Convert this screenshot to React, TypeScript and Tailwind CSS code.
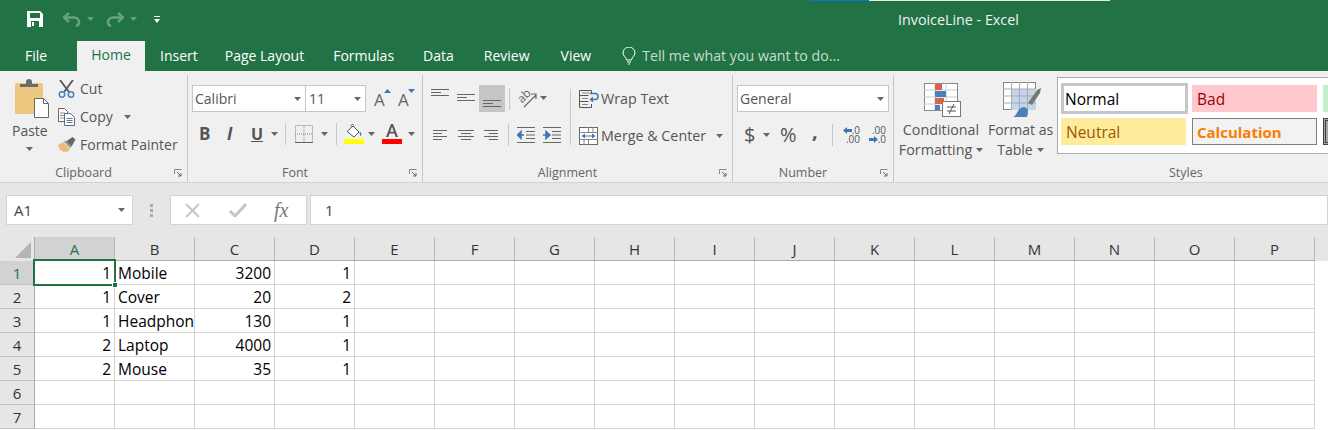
import React from 'react'

const font = 'font-["Open_Sans","Noto_Sans",sans-serif]'

const tabs = [
  { name: 'Insert', cls: 'ml-[15px]' },
  { name: 'Page Layout', cls: 'ml-[27px]' },
  { name: 'Formulas', cls: 'ml-[29px]' },
  { name: 'Data', cls: 'ml-[29px]' },
  { name: 'Review', cls: 'ml-[30px]' },
  { name: 'View', cls: 'ml-[31px]' },
]

const columns = ['A', 'B', 'C', 'D', 'E', 'F', 'G', 'H', 'I', 'J', 'K', 'L', 'M', 'N', 'O', 'P']

const rows: (string | number)[][] = [
  [1, 'Mobile', 3200, 1],
  [1, 'Cover', 20, 2],
  [1, 'Headphones', 130, 1],
  [2, 'Laptop', 4000, 1],
  [2, 'Mouse', 35, 1],
  [],
  [],
]

const Caret = ({ cls = '', color = '#666' }: { cls?: string; color?: string }) => (
  <svg width="7" height="4" viewBox="0 0 7 4" className={cls}>
    <path d="M0 0h7L3.5 4z" fill={color} />
  </svg>
)

const Sep = ({ h = 'h-[22px]', cls = '' }: { h?: string; cls?: string }) => <div className={`w-px bg-[#c6c6c6] ${h} ${cls}`} />

const Launcher = () => (
  <svg width="8" height="8" viewBox="0 0 8 8" className="absolute right-[5px] bottom-[5px]">
    <path d="M.5 5V.5H7.5M1 1" fill="none" stroke="#888" />
    <path d="M3 3l4 4M7 4v3H4" fill="none" stroke="#666" />
  </svg>
)

const Lines = ({ widths, x = 0, gap = 3, w = 18 }: { widths: number[]; x?: number; gap?: number; w?: number }) => (
  <svg width={w} height={(widths.length - 1) * gap + 1} viewBox={`0 0 ${w} ${(widths.length - 1) * gap + 1}`}>
    {widths.map((lw, i) => (
      <rect key={i} x={x === 0 ? 0 : x === 1 ? (w - lw) / 2 : w - lw} y={i * gap} width={lw} height="1" fill="#666" />
    ))}
  </svg>
)

const PasteIcon = () => (
  <svg width="35" height="39" viewBox="0 0 35 39">
    <rect x="0" y="4" width="28" height="31" rx="1.5" fill="#edc77f" />
    <path d="M5 8V5h6V3a3 3 0 0 1 6 0v2h6v3z" fill="#6b6b6b" />
    <path d="M19.500 19.500h9l5 5v14h-14z" fill="#fff" stroke="#666" />
    <path d="M28.500 19.500v5h5" fill="none" stroke="#666" />
  </svg>
)

const ScissorsIcon = () => (
  <svg width="17" height="18" viewBox="0 0 17 18">
    <path d="M2 0l9 12M15 0L6 12" stroke="#555" strokeWidth="1.800" fill="none" />
    <circle cx="4" cy="14.500" r="2.700" fill="none" stroke="#4a80b8" strokeWidth="1.500" />
    <circle cx="13" cy="14.500" r="2.700" fill="none" stroke="#4a80b8" strokeWidth="1.500" />
  </svg>
)

const CopyIcon = () => (
  <svg width="17" height="18" viewBox="0 0 17 18">
    <path d="M.5.500h6l3 3v10h-9z" fill="#fff" stroke="#666" />
    <path d="M2 5h5M2 7.500h5M2 10h5" stroke="#888" />
    <path d="M6.500 5.500h6l4 4v8h-10z" fill="#fff" stroke="#4a6f9a" />
    <path d="M8.500 10.500h6M8.500 12.500h6M8.500 14.500h6" stroke="#777" />
  </svg>
)

const BrushIcon = () => (
  <svg width="18" height="16" viewBox="0 0 18 16">
    <path d="M0 8l5-3 7 7-3 3.500-2-1-1.500 1-1.500-2-2-.5z" fill="#e8bd78" />
    <path d="M8 4.500L14.500 0l3 2.500-4 7z" fill="#666" />
    <path d="M6 5l6 6 1.500-1.500-6-6z" fill="#999" />
  </svg>
)

const GrowA = ({ up, color }: { up: boolean; color: string }) => (
  <div className="relative h-[18px] w-[16px] text-[17px] leading-[20px] text-[#666]">
    A
    <svg width="7" height="4" viewBox="0 0 7 4" className="absolute -right-[1px] -top-[1px]">
      <path d={up ? 'M0 4l3.500-4L7 4z' : 'M0 0h7L3.500 4z'} fill={color} />
    </svg>
  </div>
)

const BorderIcon = () => (
  <svg width="18" height="18" viewBox="0 0 18 18">
    <rect x=".5" y=".5" width="17" height="17" fill="none" stroke="#888" strokeDasharray="1 1" />
    <path d="M9 0v18M0 9h18" stroke="#888" strokeDasharray="1 1" />
    <path d="M0 17.500h18" stroke="#666" />
  </svg>
)

const FillIcon = () => (
  <svg width="20" height="20" viewBox="0 0 20 20">
    <path d="M3 7.500l6-5.500 6 6-5 5z" fill="#fff" stroke="#555" />
    <path d="M7 2.500c0-2 2-3 3-1" fill="none" stroke="#555" />
    <path d="M10 2l5.500 6c2-.5 2 2.500 1.500 4.500-1-1-1.500-3-1.500-4.500" fill="#3f75b4" />
    <rect x="0" y="15" width="20" height="5" fill="#ffff00" />
  </svg>
)

const FontColorIcon = () => (
  <svg width="20" height="20" viewBox="0 0 20 20">
    <path d="M4 13L9 0h2l5 13h-2.300l-1.200-3.500h-5L6.300 13zM8.200 7.700h3.600L10 2.600z" fill="#555" />
    <rect x="0" y="15" width="20" height="5" fill="#ff0000" />
  </svg>
)

const OrientIcon = () => (
  <div className="relative h-[18px] w-[20px]">
    <span className="absolute left-0 top-[-1px] -rotate-45 text-[12px] leading-[14px] text-[#666]">ab</span>
    <svg width="20" height="18" viewBox="0 0 20 18" className="absolute left-0 top-0">
      <path d="M7 17L19 5M14 4h5v5" fill="none" stroke="#666" strokeWidth="1.200" />
    </svg>
  </div>
)

const IndentIcon = ({ flip }: { flip?: boolean }) => (
  <svg width="18" height="16" viewBox="0 0 18 16">
    <path d="M0 .5h18M9 4.500h9M9 8h9M9 11.500h9M0 15.500h18" stroke="#666" />
    {flip ? <path d="M0 8h5M3 4.500l4 3.500-4 3.500z" stroke="#3f75b4" strokeWidth="1.500" fill="#3f75b4" /> : <path d="M7 8H2M4 4.500L.5 8 4 11.500z" stroke="#3f75b4" strokeWidth="1.500" fill="#3f75b4" />}
  </svg>
)

const WrapIcon = () => (
  <svg width="20" height="18" viewBox="0 0 20 18">
    <path d="M.5.500h12M.5 5.500h9M.5 11.500h9M.5 17.500h12M.5.500v17M12.500.500v3M12.500 14v3.500" stroke="#555" fill="none" />
    <path d="M3 3h8M3 8.500h6M3 14.500h6" stroke="#888" />
    <path d="M11 3.500h5a3 3 0 0 1 0 6h-4" fill="none" stroke="#3f75b4" strokeWidth="1.500" />
    <path d="M14 6.500l-3.500 3 3.500 3z" fill="#3f75b4" />
  </svg>
)

const MergeIcon = () => (
  <svg width="19" height="18" viewBox="0 0 19 18">
    <rect x=".5" y=".5" width="18" height="17" fill="#fff" stroke="#666" />
    <path d="M0 5.500h19M0 12.500h19M9.500 0v5.500M9.500 12.500V18M5 12.500V18M14 0v5.500" stroke="#888" />
    <path d="M3.500 9h12" stroke="#3f75b4" />
    <path d="M6 6.500L2.500 9 6 11.500zM13 6.500L16.500 9 13 11.500z" fill="#3f75b4" />
  </svg>
)

const DecArrow = ({ left }: { left?: boolean }) => (
  <svg width="9" height="7" viewBox="0 0 9 7">
    <path d={left ? 'M4 0v2h5v3H4v2L0 3.500z' : 'M5 0v2H0v3h5v2l4-3.500z'} fill="#3f75b4" />
  </svg>
)

const DecIcon = ({ more }: { more?: boolean }) => (
  <div className="h-[18px] w-[18px] text-[10px] leading-[9px] text-[#555]">
    {more ? (
      <>
        <div className="text-right">.00</div>
        <div className="flex items-center justify-end"><DecArrow />.0</div>
      </>
    ) : (
      <>
        <div className="flex items-center justify-end"><DecArrow left />.0</div>
        <div className="text-right">.00</div>
      </>
    )}
  </div>
)

const CondIcon = () => (
  <svg width="38" height="35" viewBox="0 0 38 35" className="ml-[3px]">
    <rect x=".5" y=".5" width="33" height="27" fill="#fff" stroke="#888" />
    <path d="M0 7h33M0 14h33M0 21h33M11 0v27M22 0v27" stroke="#ccc" />
    <rect x="11" y="1" width="7" height="6" fill="#d9634a" />
    <rect x="11" y="8" width="11" height="6" fill="#4a80b8" />
    <rect x="11" y="15" width="9" height="6" fill="#d9634a" />
    <rect x="11" y="22" width="5" height="5" fill="#4a80b8" />
    <rect x="18.500" y="18.500" width="18" height="15" fill="#fff" stroke="#777" />
    <path d="M23 24h9M23 28h9M30 21l-5 10" stroke="#555" />
  </svg>
)

const TableIcon = () => (
  <svg width="39" height="36" viewBox="0 0 39 36" className="ml-[3px]">
    <rect x=".5" y=".5" width="32" height="27" fill="#fff" stroke="#888" />
    <rect x="9" y="7" width="24" height="21" fill="#c3d5ea" />
    <path d="M0 7h33M0 14h33M0 21h33M8.500 0v28M16.500 0v28M24.500 0v28" stroke="#aaa" />
    <path d="M25 21l9-13 4-2-1 5-8 12z" fill="#777" />
    <path d="M10 35c4-1 4-9 11-10 4 1 5 4 3 10z" fill="#4a80b8" />
  </svg>
)

const Group = ({ label, w, children }: { label: string; w: string; children: React.ReactNode }) => (
  <div className={`relative flex h-[107px] shrink-0 flex-col border-r border-[#c6c6c6] ${w}`}>
    <div className="h-[90px] shrink-0">{children}</div>
    <div className="pr-[20px] text-center text-[12.5px] leading-[16px] text-[#666]">{label}</div>
    <Launcher />
  </div>
)

export default function App() {
  return (
    <div className={`h-[430px] w-[1328px] overflow-hidden bg-white ${font} relative`}>
      <div className="absolute top-0 left-[810px] h-px w-[59px] bg-[#0078d7]" />
      <div className="absolute top-0 left-[869px] h-px w-[241px] bg-[#e8e8e8]" />

      {/* title bar */}
      <div className="flex h-[41px] items-center bg-[#217346] pb-[3px] pl-[27px] text-white">
        <svg width="16" height="16" viewBox="0 0 16 16">
          <path d="M0 0h13l3 3v13H0z" fill="#fff" />
          <rect x="3" y="2" width="10" height="5" fill="#217346" />
          <rect x="4" y="10" width="8" height="6" fill="#217346" />
          <rect x="5" y="11" width="2" height="4" fill="#fff" />
        </svg>
        <svg width="18" height="15" viewBox="0 0 18 15" className="ml-[20px]">
          <path d="M6 1L1 5.500 6 10M1.500 5.500H11a5 5 0 0 1 5 4.500c0 2-1 3.500-3 4" fill="none" stroke="#6a9f83" strokeWidth="2.500" />
        </svg>
        <Caret cls="ml-[6px]" color="#6a9f83" />
        <svg width="18" height="15" viewBox="0 0 18 15" className="ml-[12px] -scale-x-100">
          <path d="M6 1L1 5.500 6 10M1.500 5.500H11a5 5 0 0 1 5 4.500c0 2-1 3.500-3 4" fill="none" stroke="#6a9f83" strokeWidth="2.500" />
        </svg>
        <Caret cls="ml-[6px]" color="#6a9f83" />
        <svg width="6" height="7" viewBox="0 0 6 7" className="ml-[17px]">
          <path d="M0 0h6v1H0zM0 3h6L3 7z" fill="#fff" />
        </svg>
        <div className="ml-[738px] mt-[2px] text-[14.3px] leading-[20px] text-[#f2f2f2]">InvoiceLine - Excel</div>
      </div>

      {/* tabs */}
      <div className="flex h-[30px] items-end bg-[#217346] text-[14px] leading-[20px] text-white">
        <div className="ml-[25px] w-[52px] pb-[5px]">File</div>
        <div className="flex h-[30px] w-[68px] items-center justify-center bg-[#f0f0f0] pb-[2px] text-[#217346]">Home</div>
        {tabs.map((t) => (
          <div key={t.name} className={`pb-[5px] ${t.cls}`}>{t.name}</div>
        ))}
        <div className="ml-[31px] flex items-center pb-[5px] text-[14.2px] text-[#c9dcd1]">
          <svg width="14" height="18" viewBox="0 0 14 18" className="mr-[6px]">
            <path d="M4.500 13c0-2.500-3.500-4-3.500-7a6 6 0 0 1 12 0c0 3-3.500 4.500-3.500 7z" fill="none" stroke="#fff" />
            <path d="M5 15h4M6 17h2" stroke="#fff" />
          </svg>
          Tell me what you want to do...
        </div>
      </div>

      {/* ribbon */}
      <div className="flex h-[112px] items-start overflow-hidden border-b border-[#d2d2d2] bg-[#f0f0f0] pt-[4px] text-[14px] leading-[18px] text-[#555]">
        <Group label="Clipboard" w="w-[188px]">
          <div className="flex">
            <div className="ml-[15px] flex w-[43px] flex-col items-start pt-[4px]">
              <PasteIcon />
              <div className="-ml-[3px] mt-[4px]">Paste</div>
              <Caret cls="ml-[11px] mt-[7px]" />
            </div>
            <div className="flex flex-col">
              <div className="flex h-[28px] items-center gap-[5px]"><ScissorsIcon />Cut</div>
              <div className="flex h-[28px] items-center gap-[5px]"><CopyIcon />Copy<Caret cls="ml-[6px]" /></div>
              <div className="flex h-[28px] items-center gap-[4px]"><BrushIcon />Format Painter</div>
            </div>
          </div>
        </Group>

        <Group label="Font" w="w-[235px]">
          <div className="flex items-start pl-[4px] pt-[10px]">
            <div className="flex h-[27px] w-[114px] items-center justify-between border border-[#c6c6c6] bg-white pl-[2px] pr-[4px]">Calibri<Caret /></div>
            <div className="flex h-[27px] w-[60px] items-center justify-between border border-l-0 border-[#c6c6c6] bg-white pl-[3px] pr-[4px]">11<Caret /></div>
            <div className="ml-[8px] mt-[5px]"><GrowA up color="#3f75b4" /></div>
            <div className="ml-[8px] mt-[5px]"><GrowA up={false} color="#3f75b4" /></div>
          </div>
          <div className="mt-[11px] flex h-[22px] items-center pl-[11px]">
            <span className="w-[27px] text-[17px] font-bold">B</span>
            <span className="w-[25px] pl-[1px] text-[17px] font-bold italic">I</span>
            <span className="w-[20px] text-[16px] font-bold underline">U</span>
            <Caret />
            <Sep cls="ml-[7px]" />
            <div className="ml-[9px]"><BorderIcon /></div>
            <Caret cls="ml-[8px]" />
            <Sep cls="ml-[8px]" />
            <div className="ml-[7px]"><FillIcon /></div>
            <Caret cls="ml-[4px]" />
            <div className="ml-[7px]"><FontColorIcon /></div>
            <Caret cls="ml-[6px]" />
          </div>
        </Group>

        <Group label="Alignment" w="w-[310px]">
          <div className="flex">
            <div className="flex w-[146px] flex-col">
              <div className="mt-[10px] flex h-[27px] items-start pl-[8px]">
                <div className="pt-[4px]"><Lines widths={[18, 10, 18]} gap={3} /></div>
                <div className="ml-[8px] pt-[9px]"><Lines widths={[18, 10, 18]} gap={3} /></div>
                <div className="ml-[4px] flex h-[27px] w-[26px] items-end justify-center bg-[#c6c6c6] pb-[5px]"><Lines widths={[18, 10, 18]} gap={3} /></div>
                <Sep h="h-[22px]" cls="ml-[4px] mt-[3px]" />
                <div className="ml-[7px] mt-[5px]"><OrientIcon /></div>
                <Caret cls="ml-[3px] mt-[11px]" />
              </div>
              <div className="mt-[12px] flex h-[22px] items-center pl-[10px]">
                <Lines widths={[14, 9, 14, 9]} w={14} />
                <div className="ml-[11px]"><Lines widths={[16, 10, 16, 10]} w={16} x={1} /></div>
                <div className="ml-[10px]"><Lines widths={[14, 9, 14, 9]} w={14} x={2} /></div>
                <Sep cls="ml-[10px]" />
                <div className="ml-[8px]"><IndentIcon /></div>
                <div className="ml-[8px]"><IndentIcon flip /></div>
              </div>
            </div>
            <Sep h="h-[56px]" cls="mt-[14px] ml-px" />
            <div className="flex flex-col pl-[8px] text-[14.3px]">
              <div className="mt-[14px] flex h-[20px] items-center gap-[2px]"><WrapIcon />Wrap Text</div>
              <div className="mt-[17px] flex h-[20px] items-center gap-[3px]"><MergeIcon />Merge &amp; Center<Caret cls="ml-[7px]" /></div>
            </div>
          </div>
        </Group>

        <Group label="Number" w="w-[161px]">
          <div className="mx-[4px] mt-[10px] flex h-[27px] items-center justify-between border border-[#c6c6c6] bg-white pl-[2px] pr-[4px]">General<Caret /></div>
          <div className="mt-[12px] flex h-[22px] items-center pl-[11px]">
            <span className="w-[19px] text-[20px]">$</span>
            <Caret />
            <span className="ml-[10px] w-[24px] text-[20px]">%</span>
            <span className="ml-[8px] w-[14px] -translate-y-[4px] text-[20px] font-bold">,</span>
            <Sep cls="ml-[6px]" />
            <div className="ml-[9px]"><DecIcon /></div>
            <div className="ml-[8px]"><DecIcon more /></div>
          </div>
        </Group>

        <div className="relative flex h-[107px] shrink-0 flex-col">
          <div className="flex h-[90px] shrink-0">
            <div className="flex w-[94px] flex-col items-center pt-[8px] text-[14.3px]">
              <CondIcon />
              <div className="mt-[2px] text-center leading-[20px]">
                Conditional<br />
                <span className="inline-flex items-center gap-[4px]">Formatting<Caret /></span>
              </div>
            </div>
            <div className="flex w-[65px] flex-col items-center pt-[7px]">
              <TableIcon />
              <div className="mt-[2px] whitespace-nowrap text-center leading-[20px]">
                Format as<br />
                <span className="inline-flex items-center gap-[4px]">Table<Caret /></span>
              </div>
            </div>
            <div className="ml-[4px] mt-[2px] grid h-[77px] w-[300px] grid-cols-[131px_131px_131px] grid-rows-[33px_33px] items-center border border-[#ababab] bg-white pl-[3px] pt-[4px] text-[15.5px]">
              <div className="flex h-[31px] w-[127px] items-center border-[3px] border-[#c6c6c6] pl-[1px] text-black">Normal</div>
              <div className="flex h-[27px] w-[125px] items-center bg-[#ffc7ce] pl-[5px] text-[#9c0006]">Bad</div>
              <div className="h-[27px] w-[125px] bg-[#c6efce]" />
              <div className="flex h-[27px] w-[125px] items-center bg-[#ffeb9c] pl-[5px] text-[#9c5700]">Neutral</div>
              <div className="flex h-[27px] w-[125px] items-center border border-[#7f7f7f] bg-[#f2f2f2] pl-[4px] text-[15px] font-bold text-[#fa7d00]">Calculation</div>
              <div className="h-[27px] w-[125px] border-[3px] border-double border-[#3f3f3f] bg-[#a5a5a5]" />
            </div>
          </div>
          <div className="ml-[275px] w-[0] whitespace-nowrap text-[12.5px] leading-[16px] text-[#666]">Styles</div>
        </div>
      </div>

      {/* formula bar */}
      <div className="flex h-[54px] items-start bg-[#e6e6e6] pl-[6px] pt-[12px] text-[15px] text-[#444]">
        <div className="flex h-[30px] w-[127px] items-center justify-between border border-[#d4d4d4] bg-white pl-[7px] pr-[7px]">A1<Caret /></div>
        <div className="ml-[16px] flex h-[30px] w-[4px] flex-col items-center justify-center gap-[2px]">
          <div className="h-[3px] w-[3px] bg-[#aaa]" />
          <div className="h-[3px] w-[3px] bg-[#aaa]" />
          <div className="h-[3px] w-[3px] bg-[#aaa]" />
        </div>
        <div className="ml-[17px] flex h-[30px] w-[137px] items-center border border-[#d4d4d4] bg-white">
          <svg width="15" height="15" viewBox="0 0 15 15" className="ml-[14px]"><path d="M1 1l13 13M14 1L1 14" stroke="#c6c6c6" strokeWidth="2" /></svg>
          <svg width="18" height="14" viewBox="0 0 18 14" className="ml-[29px]"><path d="M1 8l5 5L17 1" fill="none" stroke="#c6c6c6" strokeWidth="3" /></svg>
          <span className="ml-[27px] font-['Liberation_Serif',serif] text-[20px] italic text-[#777]">fx</span>
        </div>
        <div className="ml-[3px] flex h-[30px] flex-1 items-center border border-[#d4d4d4] bg-white pl-[14px]">1</div>
      </div>

      {/* sheet */}
      <div className="relative text-[15.5px] leading-[20px] text-black">
        <div className="flex h-[24px] bg-[#e6e6e6]">
          <div className="flex h-[24px] w-[35px] shrink-0 items-end justify-end border-r border-[#ababab] pb-[3px] pr-[3px]">
            <svg width="16" height="16" viewBox="0 0 16 16"><path d="M16 0v16H0z" fill="#b4b4b4" /></svg>
          </div>
          {columns.map((c, i) => (
            <div
              key={c}
              className={`flex h-[24px] w-[80px] shrink-0 items-center justify-center border-r border-b border-b-[#ababab] border-r-[#b8b8b8] text-[15px] ${i === 0 ? 'bg-[#d2d2d2] text-[#217346]' : 'text-[#333]'}`}
            >
              {c}
            </div>
          ))}
        </div>
        {rows.map((row, r) => (
          <div key={r} className="flex h-[24px]">
            <div className={`flex h-[24px] w-[35px] shrink-0 items-center justify-center border-r border-b border-b-[#c6c6c6] border-r-[#ababab] text-[15px] ${r === 0 ? 'bg-[#d2d2d2] text-[#217346]' : 'bg-[#e6e6e6] text-[#333]'}`}>
              {r + 1}
            </div>
            {columns.map((c, i) => {
              const v = row[i]
              return (
                <div
                  key={c}
                  className={`flex h-[24px] w-[80px] shrink-0 items-center overflow-hidden whitespace-nowrap border-r border-b border-[#d4d4d4] pl-[3px] pr-[3px] pt-px ${typeof v === 'number' ? 'justify-end' : ''}`}
                >
                  {v}
                </div>
              )
            })}
          </div>
        ))}
        <div className="absolute left-[33px] top-[22px] h-[27px] w-[83px] border-2 border-[#217346]" />
        <div className="absolute left-[112px] top-[45px] h-[6px] w-[6px] border border-white bg-[#217346]" />
      </div>
    </div>
  )
}
